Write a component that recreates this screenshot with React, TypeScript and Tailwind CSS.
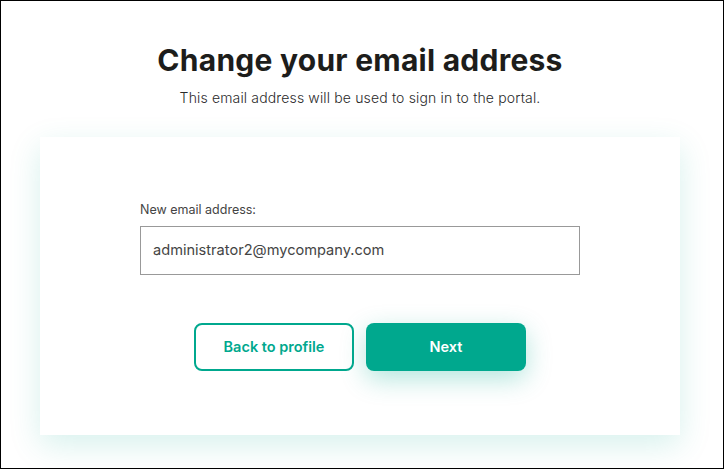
import React from "react";

export default function App() {
  return (
    <div
      className="w-[724px] h-[469px] border border-black bg-white flex flex-col items-center overflow-hidden pr-[4px]"
      style={{ fontFamily: "Inter, 'Liberation Sans', sans-serif" }}
    >
      <h1 className="mt-[41px] text-[30px] leading-[36px] font-bold text-[#1d1d1b] tracking-[0.25px]">
        Change your email address
      </h1>
      <p className="mt-[10px] text-[14px] leading-[20px] font-light text-[#2a2a2a] tracking-[0.15px]">
        This email address will be used to sign in to the portal.
      </p>
      <div className="mt-[29px] w-[640px] h-[298px] bg-white shadow-[0_10px_30px_rgba(0,168,142,0.16)] flex flex-col items-center">
        <div className="mt-[65px] w-[440px] flex flex-col">
          <label className="text-[12.5px] leading-[16px] text-[#444]">New email address:</label>
          <div className="mt-[8px] h-[49px] border border-[#999] flex items-center px-[12px]">
            <span className="text-[14.6px] text-[#444]">administrator2@mycompany.com</span>
          </div>
        </div>
        <div className="mt-[48px] flex gap-[12px]">
          <button className="w-[160px] h-[48px] rounded-[8px] border-2 border-[#00a88e] bg-white text-[#00a88e] text-[14.5px] font-semibold">
            Back to profile
          </button>
          <button className="w-[160px] h-[48px] rounded-[8px] bg-[#00a88e] text-white text-[14.5px] font-semibold shadow-[0_8px_26px_rgba(0,168,142,0.3)]">
            Next
          </button>
        </div>
      </div>
    </div>
  );
}
